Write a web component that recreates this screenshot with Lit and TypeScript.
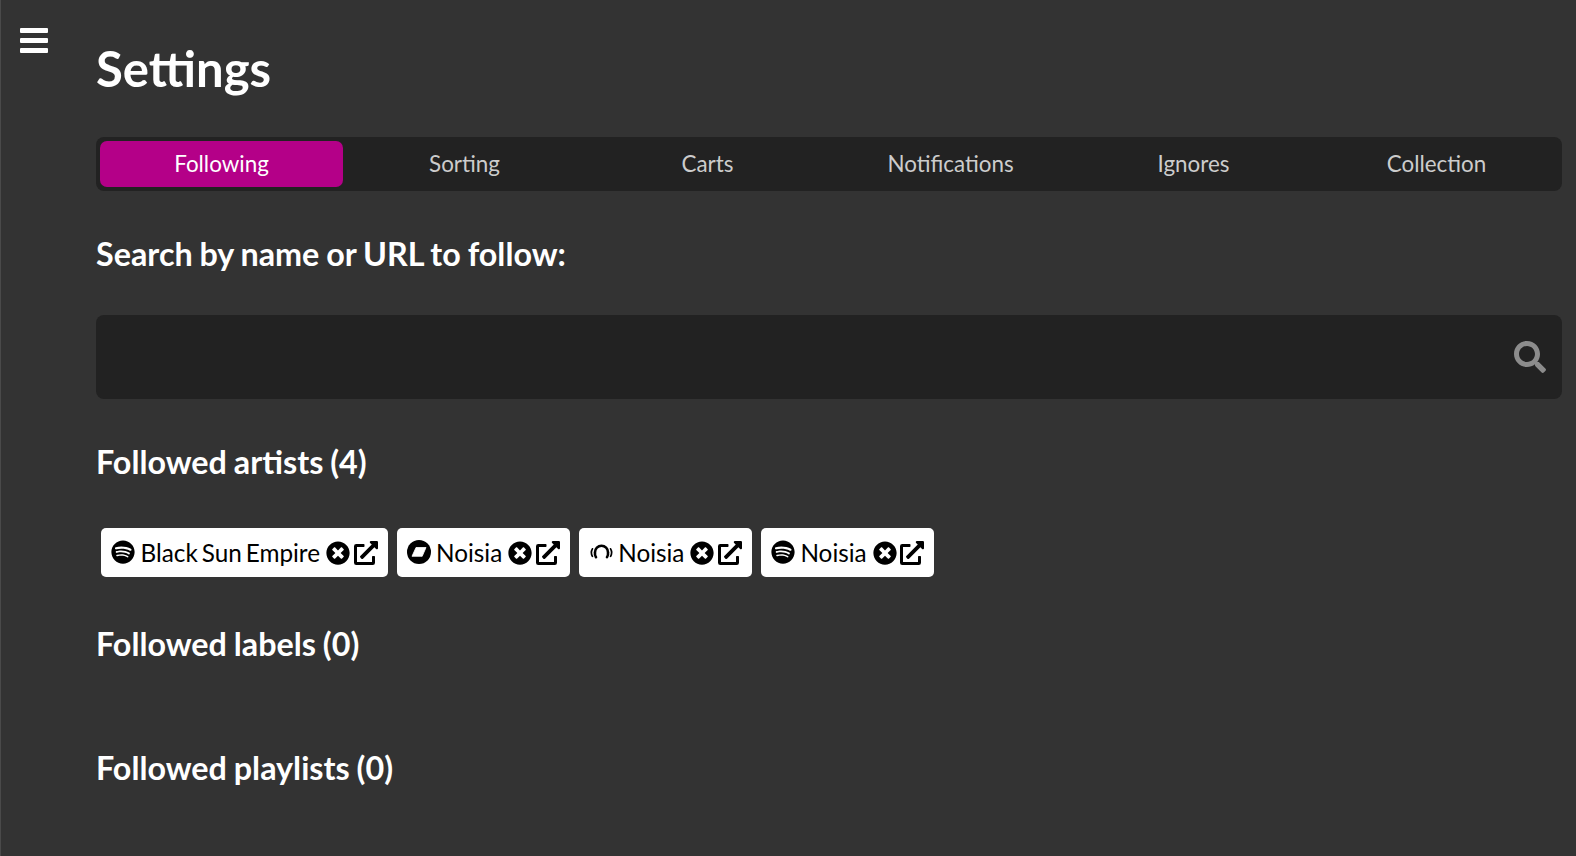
import { LitElement, html, css, svg } from "lit";
import { customElement } from "lit/decorators.js";

const spotify = svg`<path d="M248 8C111 8 0 119 0 256s111 248 248 248 248-111 248-248S385 8 248 8zm100.700 364.900c-4.200 0-6.800-1.300-10.700-3.600-62.400-37.600-135-39.200-206.700-24.500-3.900 1-9 2.600-11.900 2.600-9.700 0-15.800-7.700-15.800-15.800 0-10.300 6.100-15.200 13.600-16.800 81.900-18.100 165.600-16.500 237 26.200 6.100 3.900 9.700 7.400 9.700 16.500s-7.100 15.400-15.200 15.400zm26.900-65.600c-5.200 0-8.700-2.300-12.300-4.200-62.500-37-155.700-51.900-238.600-29.400-4.800 1.300-7.400 2.600-11.900 2.600-10.700 0-19.400-8.700-19.400-19.400s5.200-17.800 15.500-20.700c27.800-7.800 56.200-13.600 97.800-13.600 64.900 0 127.600 16.100 177 45.500 8.100 4.800 11.300 11 11.300 19.700-.1 10.800-8.500 19.500-19.400 19.500zm31-76.200c-5.200 0-8.400-1.300-12.900-3.900-71.200-42.500-198.500-52.700-280.900-29.700-3.600 1-8.100 2.600-12.900 2.600-13.200 0-23.300-10.300-23.300-23.600 0-13.600 8.400-21.300 17.400-23.900 35.200-10.300 74.600-15.200 117.500-15.200 73 0 149.500 15.200 205.400 47.800 7.800 4.500 12.900 10.700 12.900 22.600 0 13.600-11 23.300-23.200 23.300z"/>`;

const beatport = svg`<circle cx="12" cy="12" r="12"/><path fill="#fff" stroke="#fff" stroke-width="0.8" stroke-linejoin="round" d="M9 7.500h10l-3.800 8.800H5z"/>`;

const headphones = svg`<g fill="none" stroke="#000" stroke-linecap="round"><path d="M7 17.200c-1-1.500-1.300-3-1-5a6.500 6.500 0 0 1 13 0c.3 2-.1 3.500-1 5" stroke-width="2.600"/><path d="M3.400 8.800c-1.400 2.500-1.400 5 0 7.500M21.600 8.800c1.400 2.500 1.400 5 0 7.500" stroke-width="1.700"/></g>`;

const times = svg`<path d="M256 8C119 8 8 119 8 256s111 248 248 248 248-111 248-248S393 8 256 8zm121.600 313.100c4.700 4.700 4.700 12.300 0 17L338 377.600c-4.700 4.700-12.300 4.700-17 0L256 312l-65.100 65.600c-4.700 4.700-12.300 4.700-17 0L134.400 338c-4.700-4.700-4.700-12.300 0-17l65.600-65-65.600-65.100c-4.700-4.700-4.700-12.300 0-17l39.600-39.600c4.700-4.700 12.300-4.700 17 0l65 65.700 65.100-65.600c4.700-4.700 12.300-4.700 17 0l39.600 39.600c4.700 4.700 4.700 12.300 0 17L312 256l65.600 65.100z"/>`;

const external = svg`<path d="M432 320h-32a16 16 0 0 0-16 16v112H64V128h144a16 16 0 0 0 16-16V80a16 16 0 0 0-16-16H48a48 48 0 0 0-48 48v352a48 48 0 0 0 48 48h352a48 48 0 0 0 48-48V336a16 16 0 0 0-16-16zM488 0H360c-21.400 0-32 25.900-17 41l35.700 35.700L135 320.400a24 24 0 0 0 0 34L157.700 377a24 24 0 0 0 34 0l243.600-243.700L471 169c15 15 41 4.500 41-17V24a24 24 0 0 0-24-24z"/>`;

type Chip = { name: string; icon: unknown; box: string };

const chips: Chip[] = [
  { name: "Black Sun Empire", icon: spotify, box: "0 0 496 512" },
  { name: "Noisia", icon: beatport, box: "0 0 24 24" },
  { name: "Noisia", icon: headphones, box: "0 0 24 24" },
  { name: "Noisia", icon: spotify, box: "0 0 496 512" },
];

const tabs = ["Following", "Sorting", "Carts", "Notifications", "Ignores", "Collection"];

@customElement("app-root")
export class AppRoot extends LitElement {
  static styles = css`
    :host {
      display: flex;
      width: 1576px;
      height: 856px;
      overflow: hidden;
      background: #333;
      color: #fff;
      font-family: Lato, "Liberation Sans", sans-serif;
      box-sizing: border-box;
      border-left: 1px solid #4a4a4a;
    }
    .rail {
      width: 95px;
      flex: none;
      padding: 28px 0 0 19px;
      box-sizing: border-box;
    }
    .burger {
      display: flex;
      flex-direction: column;
      gap: 5px;
      width: 28px;
    }
    .burger span {
      height: 5px;
      border-radius: 1px;
      background: #fff;
    }
    main {
      width: 1466px;
      flex: none;
    }
    h1 {
      margin: 39px 0 0;
      font-size: 49px;
      line-height: 59px;
      font-weight: 700;
    }
    .tabs {
      display: grid;
      grid-template-columns: repeat(6, 1fr);
      margin-top: 39px;
      padding: 4px;
      height: 54px;
      box-sizing: border-box;
      background: #222;
      border-radius: 8px;
    }
    .tab {
      display: flex;
      align-items: center;
      justify-content: center;
      padding-bottom: 2px;
      box-sizing: border-box;
      border-radius: 7px;
      color: #ccc;
      font-size: 22.4px;
    }
    .tab.active {
      background: #b40088;
      color: #fff;
    }
    h2 {
      margin: 0;
      font-size: 32.3px;
      line-height: 40px;
      font-weight: 700;
      word-spacing: -1px;
    }
    .search-title {
      margin-top: 43px;
    }
    .search {
      display: flex;
      align-items: center;
      justify-content: flex-end;
      height: 84px;
      margin-top: 41px;
      padding-right: 16px;
      box-sizing: border-box;
      background: #222;
      border-radius: 8px;
    }
    .search svg {
      width: 32px;
      height: 32px;
      fill: #8c8c8c;
    }
    .artists-title {
      margin-top: 43px;
    }
    .chips {
      display: flex;
      gap: 9px;
      margin-top: 46px;
      padding-left: 5px;
    }
    .chip {
      display: flex;
      align-items: center;
      height: 49px;
      padding: 0 10px;
      box-sizing: border-box;
      background: #fff;
      border-radius: 5px;
      color: #000;
      font-size: 24.3px;
      word-spacing: -2.25px;
    }
    .chip svg {
      flex: none;
      display: block;
    }
    .brand {
      width: 24px;
      height: 24px;
      margin-right: 5.5px;
      position: relative;
      top: -1px;
    }
    .remove {
      width: 24px;
      height: 24px;
      margin-left: 6px;
    }
    .open {
      width: 24px;
      height: 24px;
      margin-left: 3.5px;
    }
    .labels-title {
      margin-top: 47px;
    }
    .playlists-title {
      margin-top: 84px;
    }
  `;

  render() {
    return html`
      <div class="rail">
        <div class="burger"><span></span><span></span><span></span></div>
      </div>
      <main>
        <h1>Settings</h1>
        <div class="tabs">
          ${tabs.map((t, i) => html`<div class="tab ${i === 0 ? "active" : ""}">${t}</div>`)}
        </div>
        <h2 class="search-title">Search by name or URL to follow:</h2>
        <div class="search">
          <svg viewBox="0 0 512 512">
            <path d="M505 442.700L405.300 343c-4.500-4.500-10.600-7-17-7H372c27.600-35.300 44-79.700 44-128C416 93.100 322.900 0 208 0S0 93.100 0 208s93.100 208 208 208c48.300 0 92.700-16.400 128-44v16.300c0 6.400 2.500 12.500 7 17l99.700 99.700c9.400 9.400 24.600 9.400 33.900 0l28.300-28.300c9.400-9.400 9.400-24.600.1-34zM208 336c-70.700 0-128-57.200-128-128 0-70.700 57.200-128 128-128 70.700 0 128 57.200 128 128 0 70.700-57.200 128-128 128z"/>
          </svg>
        </div>
        <h2 class="artists-title">Followed artists (4)</h2>
        <div class="chips">
          ${chips.map(
            (c) => html`
              <div class="chip">
                <svg class="brand" viewBox=${c.box}>${c.icon}</svg>
                <span>${c.name}</span>
                <svg class="remove" viewBox="0 0 512 512">${times}</svg>
                <svg class="open" viewBox="0 0 512 512">${external}</svg>
              </div>
            `
          )}
        </div>
        <h2 class="labels-title">Followed labels (0)</h2>
        <h2 class="playlists-title">Followed playlists (0)</h2>
      </main>
    `;
  }
}
